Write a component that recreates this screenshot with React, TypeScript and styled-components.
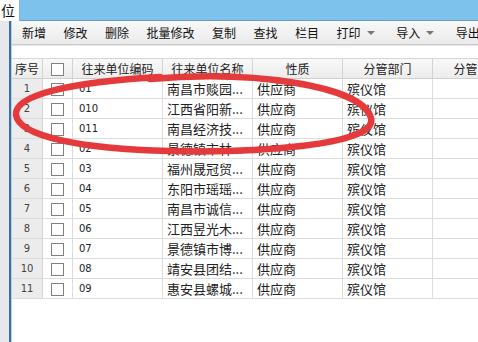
import React from "react";
import styled, { createGlobalStyle } from "styled-components";

const Global = createGlobalStyle`
  html, body { margin: 0; padding: 0; background: #fff; }
  body { font-family: "Noto Sans CJK SC", "Liberation Sans", sans-serif; }
`;

const Page = styled.div`
  position: relative;
  width: 478px;
  height: 342px;
  overflow: hidden;
  background: #fff;
  display: flex;
  flex-direction: column;
`;

const TopBar = styled.div`
  height: 20px;
  flex: none;
  background: #7cc2ec;
  border-bottom: 1px solid #6a9cc0;
  display: flex;
  align-items: flex-end;
`;

const Tab = styled.div`
  width: 19px;
  height: 21px;
  margin-bottom: -1px;
  background: #fff;
  border-right: 1px solid #8bb3d3;
  font-size: 14px;
  line-height: 21px;
  color: #111;
  text-indent: 1px;
  overflow: hidden;
`;

const Body = styled.div`
  flex: 1;
  display: flex;
  min-height: 0;
`;

const LeftStrip = styled.div`
  width: 9px;
  flex: none;
  background: #e6e8ec;
`;

const Divider = styled.div`
  width: 2px;
  flex: none;
  background: #3f6da6;
  border-right: 1px solid #b9cde3;
`;

const Main = styled.div`
  flex: 1;
  display: flex;
  flex-direction: column;
  min-width: 0;
`;

const Toolbar = styled.div`
  height: 23px;
  flex: none;
  display: flex;
  align-items: center;
  padding-left: 10px;
  gap: 17.5px;
  background: linear-gradient(#f8f8f8, #ebebeb);
  border-bottom: 1px solid #c9c9c9;
  white-space: nowrap;
`;

const ToolItem = styled.span<{ $menu?: boolean }>`
  font-size: 12px;
  color: #111;
  display: inline-flex;
  align-items: center;
  gap: 6px;
  margin-right: ${(p) => (p.$menu ? "4px" : "0")};
`;

const Caret = styled.span`
  width: 0;
  height: 0;
  border-left: 4px solid transparent;
  border-right: 4px solid transparent;
  border-top: 4px solid #777;
`;

const Gap = styled.div`
  height: 12px;
  flex: none;
  border-top: 1px solid #e6e6e6;
`;

const Grid = styled.div`
  display: grid;
  grid-template-columns: 31px 30px 90px 90px 90px 90px 90px;
  grid-auto-rows: 20px;
  border-top: 1px solid #d6d6d6;
`;

const HeadCell = styled.div`
  background: linear-gradient(#f9f9f9, #ececec);
  border-right: 1px solid #d4d4d4;
  border-bottom: 1px solid #d0d0d0;
  font-size: 12px;
  color: #222;
  display: flex;
  align-items: center;
  justify-content: center;
  white-space: nowrap;
  overflow: hidden;
`;

const NumCell = styled.div`
  background: #ececec;
  border-right: 1px solid #d4d4d4;
  border-bottom: 1px solid #dcdcdc;
  font-family: "DejaVu Sans", sans-serif;
  font-size: 10px;
  color: #444;
  display: flex;
  align-items: center;
  justify-content: center;
`;

const Cell = styled.div<{ $code?: boolean }>`
  border-right: 1px solid #dcdcdc;
  border-bottom: 1px solid #dcdcdc;
  font-size: ${(p) => (p.$code ? "10px" : "13px")};
  font-family: ${(p) =>
    p.$code ? `"DejaVu Sans", sans-serif` : `"Noto Sans CJK SC", sans-serif`};
  color: #222;
  display: flex;
  align-items: center;
  padding-left: ${(p) => (p.$code ? "6px" : "4px")};
  white-space: nowrap;
  overflow: hidden;
`;

const BoxCell = styled.div`
  border-right: 1px solid #dcdcdc;
  border-bottom: 1px solid #dcdcdc;
  display: flex;
  align-items: center;
  justify-content: center;
`;

const Check = styled.span`
  width: 11px;
  height: 11px;
  border: 1px solid #808080;
  background: #fff;
  margin-top: 2px;
`;

const Annotation = styled.svg`
  position: absolute;
  left: 0;
  top: 0;
  pointer-events: none;
`;

const rows = [
  ["01", "南昌市赕园..."],
  ["010", "江西省阳新..."],
  ["011", "南昌经济技..."],
  ["02", "景德镇市林..."],
  ["03", "福州晟冠贸..."],
  ["04", "东阳市瑶瑶..."],
  ["05", "南昌市诚信..."],
  ["06", "江西昱光木..."],
  ["07", "景德镇市博..."],
  ["08", "靖安县团结..."],
  ["09", "惠安县螺城..."],
];

const tools: [string, boolean][] = [
  ["新增", false],
  ["修改", false],
  ["删除", false],
  ["批量修改", false],
  ["复制", false],
  ["查找", false],
  ["栏目", false],
  ["打印", true],
  ["导入", true],
  ["导出", false],
];

const headers = ["序号", "", "往来单位编码", "往来单位名称", "性质", "分管部门", "分管人员"];

export default function App() {
  return (
    <>
      <Global />
      <Page>
        <TopBar>
          <Tab>位</Tab>
        </TopBar>
        <Body>
          <LeftStrip />
          <Divider />
          <Main>
            <Toolbar>
              {tools.map(([t, m]) => (
                <ToolItem key={t} $menu={m}>
                  {t}
                  {m && <Caret />}
                </ToolItem>
              ))}
            </Toolbar>
            <Gap />
            <Grid>
              {headers.map((h, i) => (
                <HeadCell key={i}>{i === 1 ? <Check /> : h}</HeadCell>
              ))}
              {rows.map(([code, name], i) => (
                <React.Fragment key={i}>
                  <NumCell>{i + 1}</NumCell>
                  <BoxCell>
                    <Check />
                  </BoxCell>
                  <Cell $code>{code}</Cell>
                  <Cell>{name}</Cell>
                  <Cell>供应商</Cell>
                  <Cell>殡仪馆</Cell>
                  <Cell />
                </React.Fragment>
              ))}
            </Grid>
          </Main>
        </Body>
        <Annotation width="478" height="342" viewBox="0 0 478 342">
          <path
            d="M150 79 C 250 70, 362 85, 371 118 C 379 146, 250 153, 170 151 C 80 149, 19 136, 16 115 C 14 95, 70 82, 160 77"
            fill="none"
            stroke="#e53a3b"
            strokeWidth="6.5"
            strokeLinecap="round"
          />
        </Annotation>
      </Page>
    </>
  );
}
